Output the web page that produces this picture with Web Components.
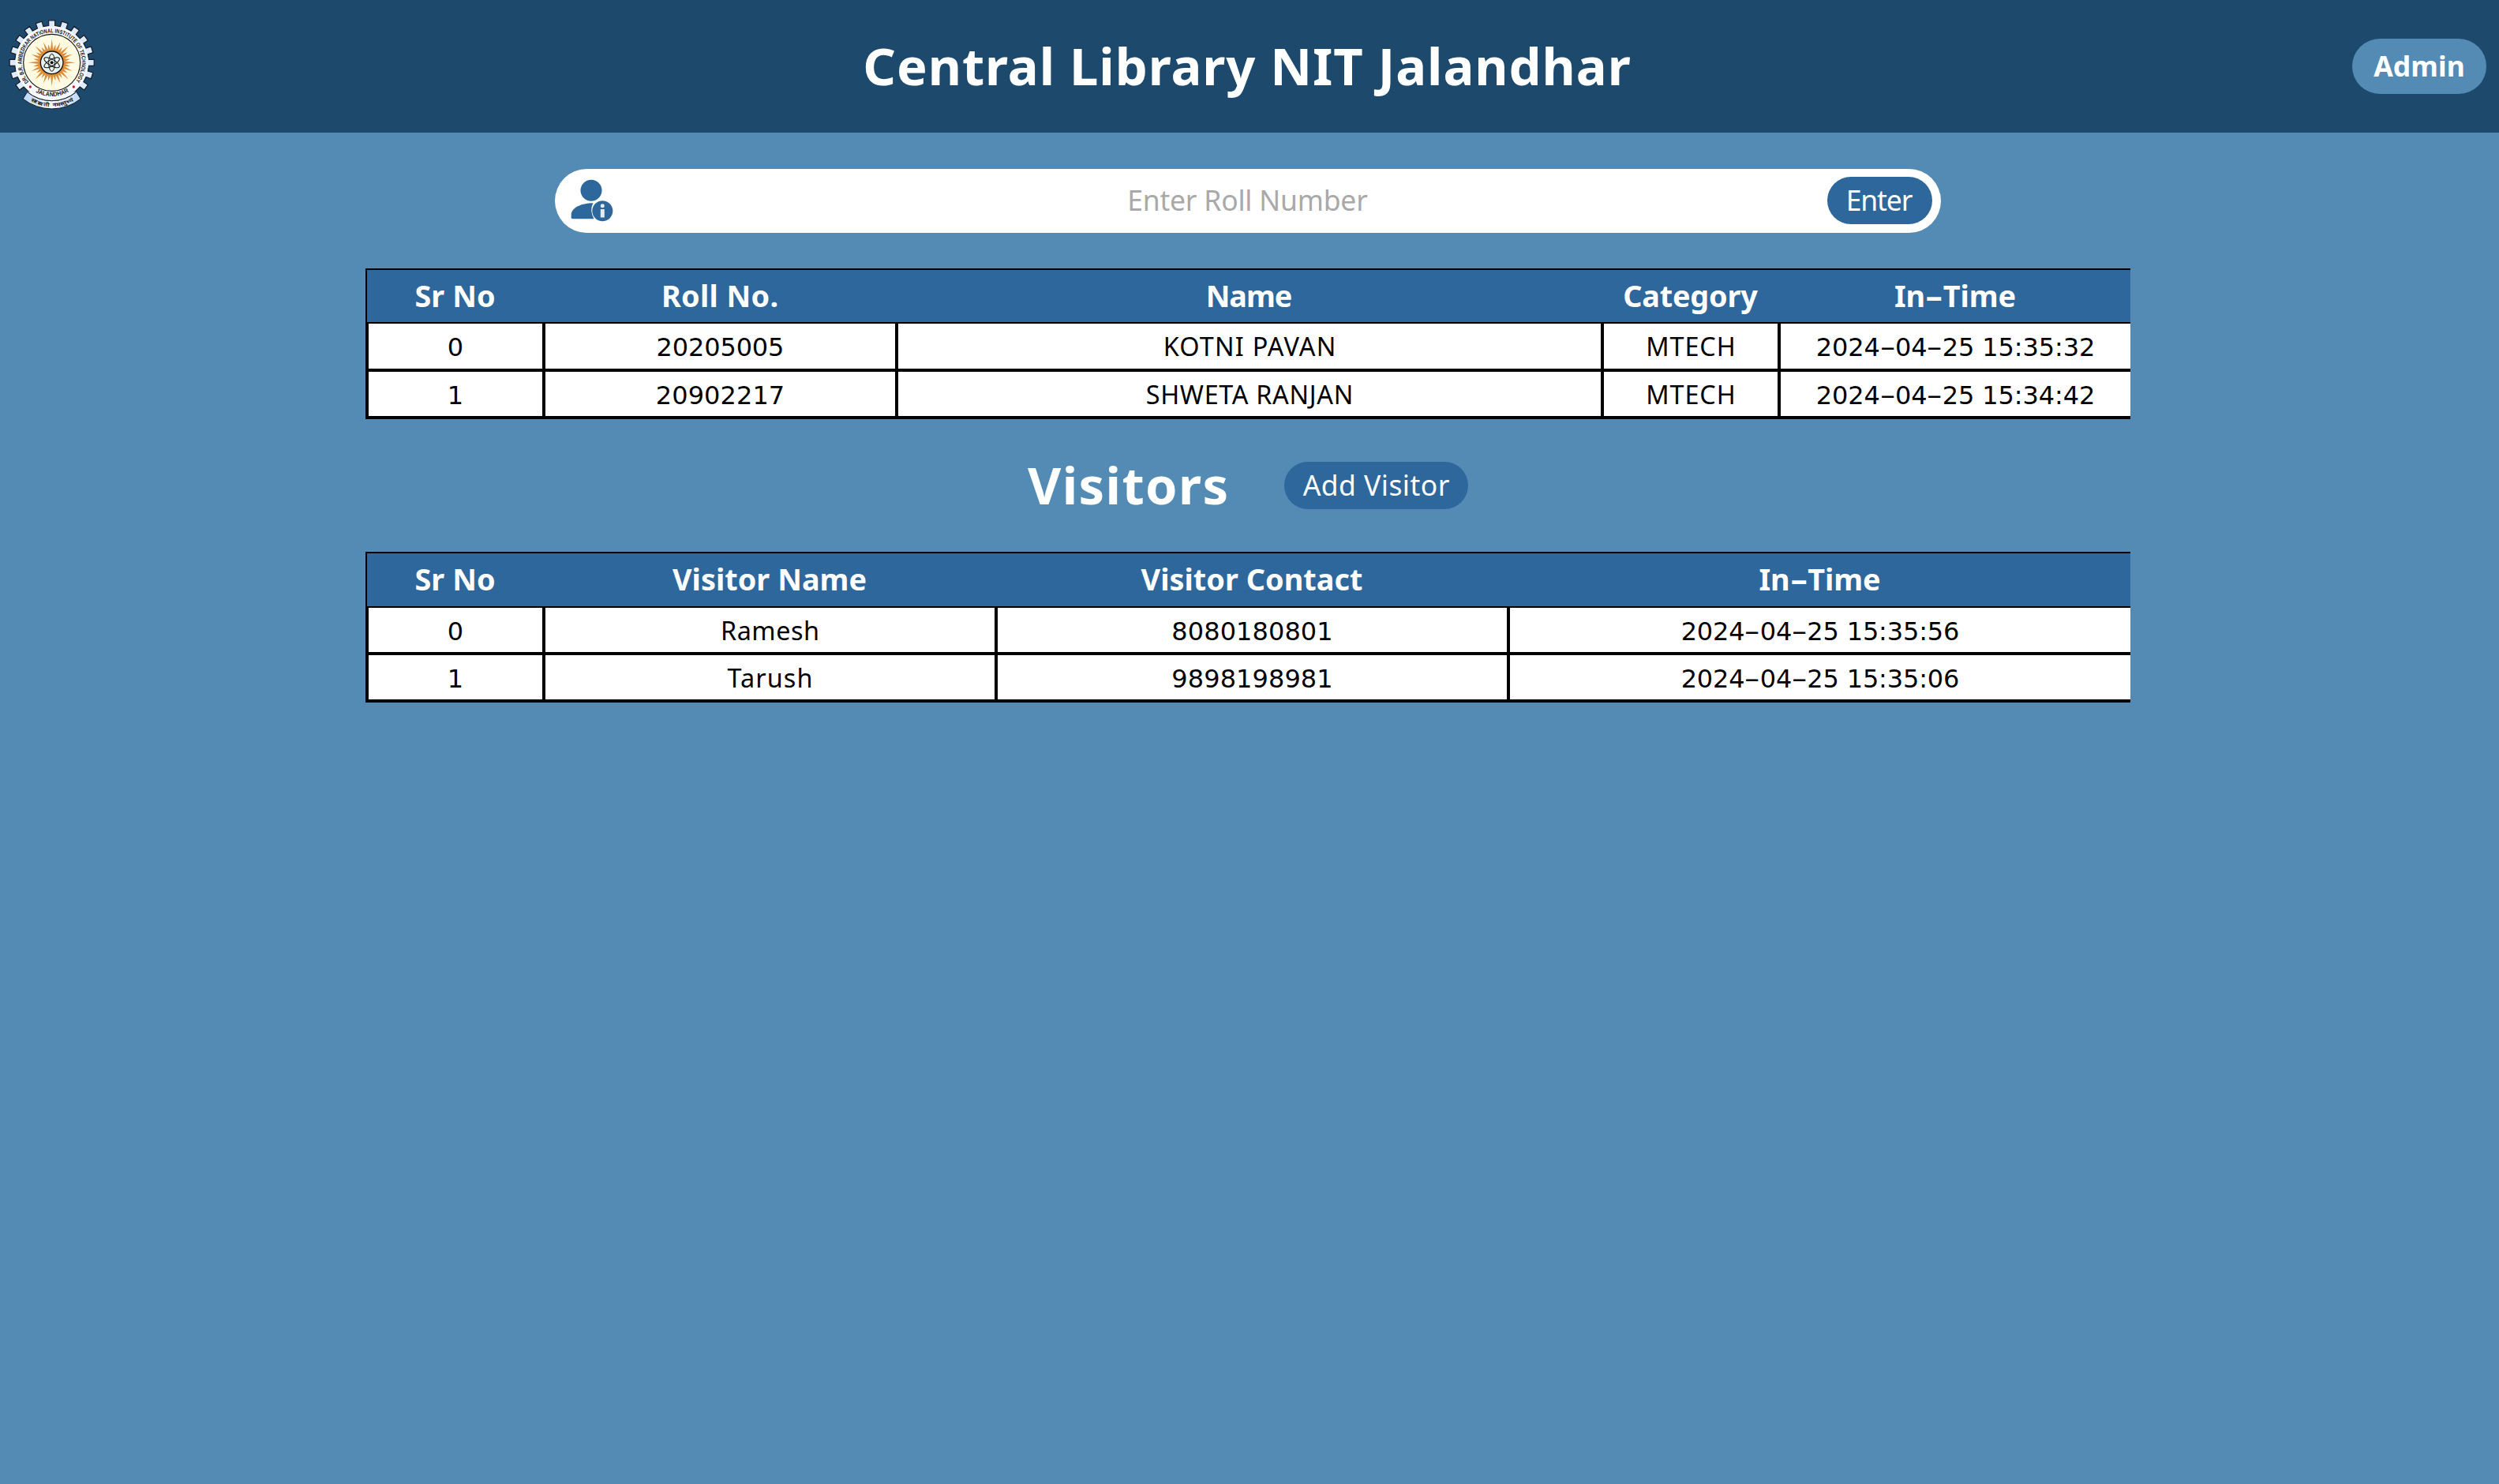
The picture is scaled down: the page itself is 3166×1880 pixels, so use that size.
<!DOCTYPE html>
<html lang="en">
<head>
<meta charset="utf-8">
<title>Central Library NIT Jalandhar</title>
<style>
html,body{margin:0;height:100%}
body{background:#538bb4;font-family:"Noto Sans","Open Sans",sans-serif;color:#000}
</style>
</head>
<body>
<library-app></library-app>
<script>
// Text set to a given ink width by adjusting its tracking.
class FitText extends HTMLElement{
  connectedCallback(){
    const t=this.getAttribute('text');
    const root=this.attachShadow({mode:'open'});
    root.innerHTML=`<style>:host{display:inline-block;white-space:pre}
      i{display:inline-block;font-style:normal;text-align:center;letter-spacing:0;width:var(--dash,.6em);transform:scaleX(1.8)}</style><span>${t.replace(/-/g,'<i>-</i>')}</span>`;
    const w=+this.getAttribute('ink');
    if(!w)return;
    const s=root.querySelector('span'),cs=getComputedStyle(this);
    const c=document.createElement('canvas').getContext('2d');
    c.font=`${cs.fontWeight} ${cs.fontSize} ${cs.fontFamily}`;
    const m=c.measureText(t);
    const ink=s.getBoundingClientRect().width-(m.width-m.actualBoundingBoxRight-m.actualBoundingBoxLeft);
    const ls=(w-ink)/(t.length-1);
    s.style.letterSpacing=ls+'px';
    s.style.marginRight=-ls+'px';
  }
}
customElements.define('fit-text',FitText);

class NitLogo extends HTMLElement{
  connectedCallback(){
    const cx=197,cy=238,pt=(r,a)=>{const t=a*Math.PI/180;return (cx+r*Math.sin(t)).toFixed(1)+','+(cy-r*Math.cos(t)).toFixed(1)};
    let gear=[],rays=[];
    for(let i=0;i<20;i++){const a=i*18,r=(i>7&&i<13)?141:161;gear.push(pt(141,a-4.8),pt(r,a-4.3),pt(r,a+4.3),pt(141,a+4.8))}
    for(let i=0;i<32;i++){const a=i*11.25;rays.push(pt(51,a-5.6),pt(i%4==0?90:i%2?71:84,a))}
    this.attachShadow({mode:'open'}).innerHTML=`<style>:host{display:block;width:140px;height:168px}svg{display:block}</style>
    <svg width="140" height="168" viewBox="0 0 420 504">
      <defs>
        <path id="ring" d="M${pt(114,-130)} A114 114 0 1 1 ${pt(114,130)}"/>
        <path id="low" d="M${pt(128,-151)} A128 128 0 0 0 ${pt(128,149)}"/>
        <path id="rib" d="M${pt(167,-151)} A167 167 0 0 0 ${pt(167,149)}"/>
        <linearGradient id="g" x1="0" x2="1"><stop offset="0" stop-color="#b9d8fb"/><stop offset=".5" stop-color="#f3f8ff"/><stop offset="1" stop-color="#bdd9fa"/></linearGradient>
      </defs>
      <polygon points="${gear.join(' ')}" fill="#dceafc" stroke="#151a22" stroke-width="3.5"/>
      <path d="M${pt(145,-140)} L${pt(176,-141.5)} A177 177 0 0 0 ${pt(176,141.5)} L${pt(145,140)} A145 145 0 0 1 ${pt(145,-140)}Z" fill="url(#g)" stroke="#151a22" stroke-width="3"/>
      <circle cx="${cx}" cy="${cy}" r="138" fill="#f6f9ff"/>
      <path d="M${pt(145,-140)} A145 145 0 0 0 ${pt(145,140)}" fill="#f6f9ff" stroke="#151a22" stroke-width="3"/>
      <circle cx="${cx}" cy="${cy}" r="108" fill="#fffbe2" stroke="#161616" stroke-width="3.5"/>
      <polygon points="${rays.join(' ')}" fill="#dd8d38"/>
      <circle cx="${cx}" cy="${cy}" r="43" fill="#e8f2ed" stroke="#111" stroke-width="4"/>
      <g fill="none" stroke="#111" stroke-width="3">
        <ellipse cx="${cx}" cy="${cy}" rx="12" ry="33"/>
        <ellipse cx="${cx}" cy="${cy}" rx="12" ry="33" transform="rotate(60 ${cx} ${cy})"/>
        <ellipse cx="${cx}" cy="${cy}" rx="12" ry="33" transform="rotate(120 ${cx} ${cy})"/>
      </g>
      <circle cx="${cx}" cy="${cy}" r="6" fill="#111"/>
      <circle cx="115" cy="330" r="5" fill="#c41f2e"/><circle cx="280" cy="330" r="5" fill="#c41f2e"/>
      <g fill="#171717" font-family="'Liberation Sans',sans-serif" font-weight="bold">
        <text font-size="22"><textPath href="#ring" textLength="512" lengthAdjust="spacingAndGlyphs">DR. B.R. AMBEDKAR NATIONAL INSTITUTE OF TECHNOLOGY</textPath></text>
        <text font-size="23"><textPath href="#low" textLength="133" lengthAdjust="spacingAndGlyphs">JALANDHAR</textPath></text>
        <text font-size="19"><textPath href="#rib" textLength="171" lengthAdjust="spacingAndGlyphs">सरस्वती&#160;&#160;नमस्तुभ्यं</textPath></text>
      </g>
    </svg>`;
  }
}
customElements.define('nit-logo',NitLogo);

class PillButton extends HTMLElement{
  connectedCallback(){
    this.attachShadow({mode:'open'}).innerHTML=`<style>:host{display:block}
    button{display:flex;justify-content:center;box-sizing:border-box;width:100%;height:100%;border:0;border-radius:99px;background:var(--pill,#2e679b);color:#fff;font:inherit;line-height:inherit;padding:0;cursor:pointer}</style><button><slot></slot></button>`;
  }
}
customElements.define('pill-button',PillButton);

class SiteHeader extends HTMLElement{
  connectedCallback(){
    this.attachShadow({mode:'open'}).innerHTML=`<style>
    :host{display:grid;grid-template-columns:1fr auto 1fr;height:168px;background:#1d496d;color:#fff}
    h1{margin:0 7px 0 0;font-size:65px;font-weight:700;line-height:166px}
    pill-button{--pill:#538bb4;justify-self:end;width:170px;height:70px;margin:49px 16px 0 0;font-size:35.5px;font-weight:700;line-height:69px}
    </style><nit-logo></nit-logo><h1><fit-text text="Central Library NIT Jalandhar" ink="969.5"></fit-text></h1>
    <pill-button><fit-text text="Admin" ink="113.5"></fit-text></pill-button>`;
  }
}
customElements.define('site-header',SiteHeader);

class RollSearch extends HTMLElement{
  connectedCallback(){
    this.attachShadow({mode:'open'}).innerHTML=`<style>
    :host{display:flex;box-sizing:border-box;width:1756px;height:81px;border-radius:41px;background:#fff;font-size:35.5px;line-height:79px;padding:0 11px 0 20px}
    svg{display:block;width:54px;height:81px;flex:none}
    .ph{flex:1;text-align:center;color:#a9a9a9;margin-left:69px}
    pill-button{width:133px;height:60px;margin-top:10px;line-height:59px}
    pill-button fit-text{margin-right:1px}
    </style>
    <svg viewBox="0 0 54 81"><g fill="#2e679b"><circle cx="26" cy="27.3" r="13.5"/><path d="M.7 60.5Q0 63.3 2.8 63.3H29.5Q23.5 52 28.500 43.2C12 43.500 1 49.500 .7 58Z"/><circle cx="40.300" cy="53.300" r="13"/></g>
      <g fill="#e4edf5"><circle cx="40.300" cy="46.700" r="2.500"/><path d="M37.800 51H42.800V61.500H37.800Z"/></g></svg>
    <div class="ph"><fit-text text="Enter Roll Number" ink="302"></fit-text></div>
    <pill-button><fit-text text="Enter" ink="82"></fit-text></pill-button>`;
  }
}
customElements.define('roll-search',RollSearch);

// cols: column widths; rows: [text, ink width] pairs per cell
class RecordTable extends HTMLElement{
  set data(d){
    const cell=([t,w],tag)=>`<${tag} class="${/^[\d\-: ]+$/.test(t)?'num':''}"><fit-text text="${t}" ink="${w||''}"></fit-text></${tag}>`;
    this.attachShadow({mode:'open'}).innerHTML=`<style>
    :host{display:block;width:2236px}
    .row{display:grid;grid-template-columns:${d.cols.map(c=>c+'px').join(' ')}}
    .head{box-sizing:border-box;height:${d.head}px;border-top:2px solid #000;border-bottom:2px solid #000;border-left:2px solid #000;background:#2e679b;color:#fff;font-size:37.8px;font-weight:700;line-height:${d.headLine}px}
    .head b{display:block;text-align:center;font-weight:700;margin-right:1px}
    .body{background:#fff;border-bottom:4px solid #000;font-size:32.4px;line-height:57px}
    .body span{display:block;text-align:center;box-sizing:border-box;border-left:4px solid #000;height:56px}
    .tall span{height:57px}
    .body .num{font-family:"DejaVu Sans",sans-serif;font-size:32px;line-height:60px}
    </style><div class="row head">${d.heads.map(h=>cell(h,'b')).join('')}</div>
    ${d.rows.map((r,i)=>`<div class="row body ${d.tall&&!i?'tall':''}">${r.map(c=>cell(c,'span')).join('')}</div>`).join('')}`;
  }
}
customElements.define('record-table',RecordTable);

class LibraryApp extends HTMLElement{
  connectedCallback(){
    const root=this.attachShadow({mode:'open'});
    root.innerHTML=`<style>
    :host{display:block;min-height:100vh;background:#538bb4}
    main{display:flex;flex-direction:column;align-items:flex-start}
    roll-search{margin:46px 0 45px 703px}
    record-table{margin-left:463px}
    .bar{display:flex;margin-left:1302px;height:168px;gap:73px}
    h2{margin:0;color:#fff;font-size:65px;font-weight:700;width:252px;white-space:nowrap;line-height:166px}
    pill-button{width:233px;height:60px;margin-top:54px;font-size:35.5px;line-height:59px}
    </style><site-header></site-header><main><roll-search></roll-search>
    <record-table id="a"></record-table>
    <div class="bar"><h2><fit-text text="Visitors" ink="251.5"></fit-text></h2><pill-button><fit-text text="Add Visitor" ink="186"></fit-text></pill-button></div>
    <record-table id="b"></record-table></main>`;
    root.getElementById('a').data={cols:[224,447,894,224,447],head:70,headLine:66,tall:true,
      heads:[['Sr No',99.5],['Roll No.',143.5],['Name',105],['Category',169],['In-Time',151.5]],
      rows:[[['0'],['20205005',157.5],['KOTNI PAVAN',213],['MTECH',107.5],['2024-04-25 15:35:32',349]],
            [['1'],['20902217',159],['SHWETA RANJAN',259],['MTECH',107.5],['2024-04-25 15:34:42',349]]]};
    root.getElementById('b').data={cols:[224,573,649,790],head:71,headLine:66,
      heads:[['Sr No',99.5],['Visitor Name',244.5],['Visitor Contact',280.5],['In-Time',151.5]],
      rows:[[['0'],['Ramesh',120],['8080180801',200],['2024-04-25 15:35:56',349]],
            [['1'],['Tarush',106],['9898198981',200],['2024-04-25 15:35:06',349]]]};
  }
}
customElements.define('library-app',LibraryApp);
</script>
</body>
</html>
